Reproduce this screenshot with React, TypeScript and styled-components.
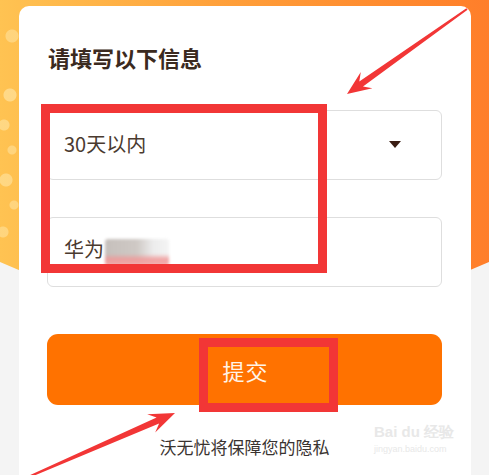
import React from 'react';
import styled, { createGlobalStyle } from 'styled-components';

const GlobalStyle = createGlobalStyle`
  html, body {
    margin: 0;
    padding: 0;
    background: #f4f4f4;
  }
  body {
    font-family: "Noto Sans CJK SC", "Noto Sans", sans-serif;
  }
`;

const Page = styled.div`
  position: relative;
  width: 489px;
  height: 475px;
  overflow: hidden;
  background: #f4f4f4;
  display: flex;
  flex-direction: column;

  /* orange banner behind the card */
  &::before {
    content: '';
    position: absolute;
    inset: 0 0 auto 0;
    height: 380px;
    background:
      radial-gradient(circle at 10px 95px, rgba(255, 236, 180, 0.55) 0 6px, transparent 7px),
      radial-gradient(circle at 4px 125px, rgba(255, 236, 180, 0.5) 0 5px, transparent 6px),
      radial-gradient(circle at 12px 150px, rgba(255, 236, 180, 0.45) 0 4px, transparent 5px),
      radial-gradient(circle at 6px 180px, rgba(255, 236, 180, 0.5) 0 6px, transparent 7px),
      radial-gradient(circle at 14px 205px, rgba(255, 236, 180, 0.45) 0 4px, transparent 5px),
      radial-gradient(circle at 3px 232px, rgba(255, 236, 180, 0.45) 0 5px, transparent 6px),
      radial-gradient(circle at 12px 36px, rgba(255, 236, 180, 0.45) 0 6px, transparent 7px),
      linear-gradient(90deg, #ffc352 0%, #ffa03a 45%, #ff8a2e 80%, #ff7e2a 100%);
    clip-path: polygon(0 0, 100% 0, 100% 262px, 50% 366px, 0 262px);
  }
`;

const Card = styled.section`
  position: relative;
  margin: 6px 18px 0 19px;
  flex: 1;
  background: #ffffff;
  border-radius: 10px 10px 0 0;
  padding: 36px 29px 0 28px;
  display: flex;
  flex-direction: column;
`;

const Title = styled.h2`
  margin: 0;
  font-size: 22px;
  line-height: 30px;
  font-weight: 700;
  color: #3b2a20;
  padding-left: 1px;
`;

const Field = styled.div<{ $gap: number }>`
  margin-top: ${({ $gap }) => $gap}px;
  height: 70px;
  box-sizing: border-box;
  border: 1.5px solid #dedede;
  border-radius: 6px;
  padding: 0 40px 4px 16px;
  display: flex;
  align-items: center;
  justify-content: space-between;
  font-size: 20px;
  color: #4a3a2f;
`;

const Caret = styled.span`
  width: 0;
  height: 0;
  margin-top: 2px;
  border-left: 6px solid transparent;
  border-right: 6px solid transparent;
  border-top: 7px solid #3a1d12;
`;

const Blurred = styled.span`
  display: inline-block;
  width: 64px;
  height: 27px;
  margin-left: 1px;
  vertical-align: middle;
  background:
    linear-gradient(180deg, rgba(255, 255, 255, 0) 55%, rgba(240, 150, 150, 0.85) 75%, rgba(245, 170, 170, 0.9) 100%),
    linear-gradient(90deg, #c6c0bc 0%, #cfc9c5 50%, #ececec 75%, #f4f4f4 100%);
  filter: blur(1.5px);
  border-radius: 3px;
`;

const Submit = styled.button`
  margin-top: 47px;
  height: 71px;
  border: none;
  border-radius: 11px;
  background: #ff7200;
  color: #fff4e8;
  font-family: inherit;
  font-size: 22px;
  letter-spacing: 1px;
  display: flex;
  align-items: center;
  justify-content: center;
  padding: 0 0 0 2px;
`;

const Note = styled.p`
  margin: 30px 0 0;
  text-align: center;
  font-size: 17px;
  line-height: 24px;
  color: #3a3330;
`;

const Mark = styled.div<{ $x: number; $y: number; $w: number; $h: number }>`
  position: absolute;
  left: ${({ $x }) => $x}px;
  top: ${({ $y }) => $y}px;
  width: ${({ $w }) => $w}px;
  height: ${({ $h }) => $h}px;
  box-sizing: border-box;
  border: 9px solid #f23636;
  pointer-events: none;
`;

const Overlay = styled.svg`
  position: absolute;
  inset: 0;
  width: 489px;
  height: 475px;
  pointer-events: none;
`;

const Watermark = styled.div`
  position: absolute;
  left: 374px;
  top: 424px;
  color: #e8e8e8;
  font-family: "Liberation Sans", Arial, sans-serif;
  line-height: 1;
  pointer-events: none;
  .logo {
    font-size: 15px;
    font-weight: 700;
  }
  .url {
    margin-top: 6px;
    font-size: 9px;
  }
`;

type P = [number, number];

// tapered arrow pointing from tail to tip
const arrowPoints = (tail: P, tip: P, head = 24, half = 10) => {
  const dx = tip[0] - tail[0];
  const dy = tip[1] - tail[1];
  const len = Math.hypot(dx, dy);
  const u: P = [dx / len, dy / len];
  const n: P = [-u[1], u[0]];
  const at = (b: P, a: number, s: number): P => [b[0] + u[0] * a + n[0] * s, b[1] + u[1] * a + n[1] * s];
  const pts = [
    at(tail, 0, 1),
    at(tip, -head * 0.72, 3.2),
    at(tip, -head, half),
    tip,
    at(tip, -head, -half),
    at(tip, -head * 0.72, -3.2),
    at(tail, 0, -1),
  ];
  return pts.map((p) => p.map((v) => v.toFixed(1)).join(',')).join(' ');
};

const App = () => (
  <>
    <GlobalStyle />
    <Page>
      <Card>
        <Title>请填写以下信息</Title>
        <Field $gap={38}>
          <span>30天以内</span>
          <Caret />
        </Field>
        <Field $gap={37}>
          <span>
            华为<Blurred />
          </span>
        </Field>
        <Submit>提交</Submit>
        <Note>沃无忧将保障您的隐私</Note>
      </Card>

      <Watermark>
        <div className="logo">Bai du 经验</div>
        <div className="url">jingyan.baidu.com</div>
      </Watermark>

      <Mark $x={41} $y={104} $w={286} $h={169} />
      <Mark $x={199} $y={338} $w={139} $h={74} />

      <Overlay viewBox="0 0 489 475">
        <polygon points={arrowPoints([467, 9], [347, 94], 24, 10)} fill="#f23636" />
        <polygon points={arrowPoints([26, 478], [175, 413], 26, 10)} fill="#f23636" />
      </Overlay>
    </Page>
  </>
);

export default App;
